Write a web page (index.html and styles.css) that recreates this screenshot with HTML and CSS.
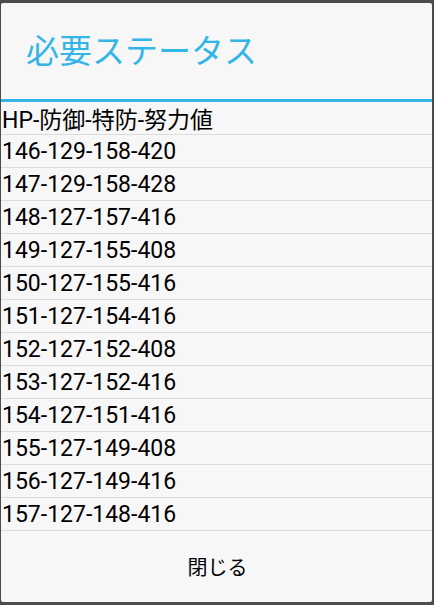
FILE: index.html
```html
<!DOCTYPE html>
<html>
<head>
<meta charset="utf-8">
<link rel="stylesheet" href="styles.css">
</head>
<body>
<div class="dialog">
  <div class="title">必要ステータス</div>
  <div class="list">
    <div class="row">HP-防御-特防-努力値</div>
    <div class="row">146-129-158-420</div>
    <div class="row">147-129-158-428</div>
    <div class="row">148-127-157-416</div>
    <div class="row">149-127-155-408</div>
    <div class="row">150-127-155-416</div>
    <div class="row">151-127-154-416</div>
    <div class="row">152-127-152-408</div>
    <div class="row">153-127-152-416</div>
    <div class="row">154-127-151-416</div>
    <div class="row">155-127-149-408</div>
    <div class="row">156-127-149-416</div>
    <div class="row">157-127-148-416</div>
  </div>
  <div class="footer"><span class="close">閉じる</span></div>
</div>
</body>
</html>
```
FILE: styles.css
```css
html, body {
  margin: 0;
  padding: 0;
}
body {
  background: #4b4d4b;
  width: 434px;
  height: 605px;
  overflow: hidden;
  font-family: Roboto, "Noto Sans CJK JP", sans-serif;
}
.dialog {
  margin: 3px 2px 0 1px;
  height: 599px;
  background: #f7f7f7;
  border-radius: 2px;
  display: flex;
  flex-direction: column;
}
.title {
  height: 99px;
  box-sizing: border-box;
  padding-left: 25px;
  padding-bottom: 5px;
  display: flex;
  align-items: center;
  font-size: 33px;
  color: #33b5e5;
  border-bottom: 3px solid #33b5e5;
}
.list {
  display: flex;
  flex-direction: column;
}
.row {
  height: 33px;
  box-sizing: border-box;
  border-bottom: 1px solid #dcdcdc;
  padding-left: 1px;
  display: flex;
  align-items: center;
  font-size: 23px;
  color: #000;
}
.footer {
  flex: 1;
  display: flex;
  align-items: center;
  justify-content: center;
}
.close {
  font-size: 20px;
  color: #000;
  padding-left: 2px;
}
```
